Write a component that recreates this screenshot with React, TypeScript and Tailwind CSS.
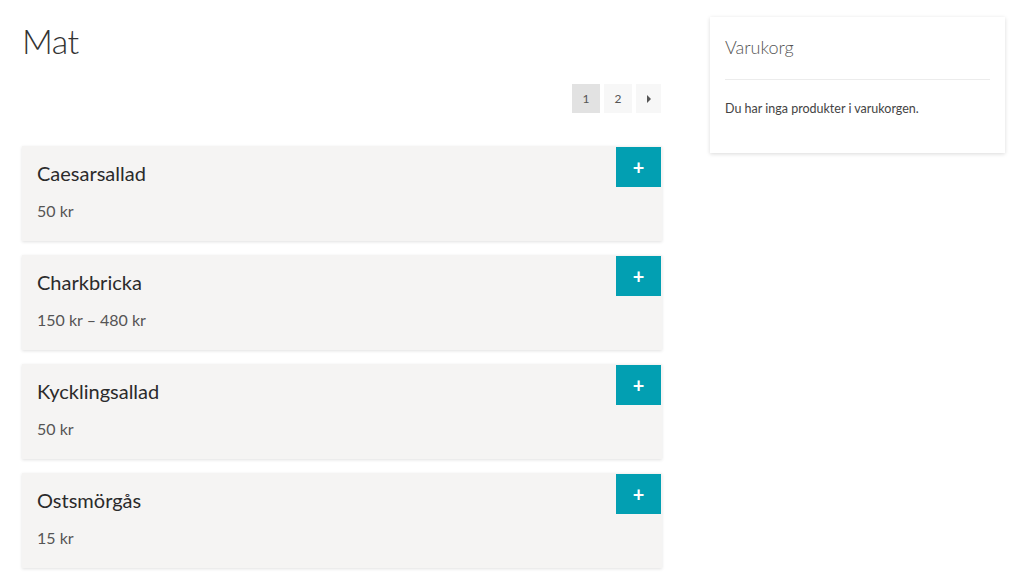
import React from "react";

const items = [
  { name: "Caesarsallad", price: "50 kr" },
  { name: "Charkbricka", price: "150 kr – 480 kr" },
  { name: "Kycklingsallad", price: "50 kr" },
  { name: "Ostsmörgås", price: "15 kr" },
];

export default function App() {
  return (
    <div
      className="w-[1024px] h-[582px] bg-white flex overflow-hidden"
      style={{ fontFamily: "Lato, 'Open Sans', sans-serif" }}
    >
      <div className="w-[640px] ml-[22px] flex flex-col">
        <h1 className="mt-[19px] text-[34px] leading-[44px] font-light text-[#333] tracking-[-0.5px]">Mat</h1>
        <div className="flex justify-end gap-[4px] mt-[21px] mr-[1px]">
          <div className="w-[28px] h-[29px] bg-[#e2e2e2] flex items-center justify-center text-[12px] text-[#555]">1</div>
          <div className="w-[28px] h-[29px] bg-[#f7f7f7] flex items-center justify-center text-[12px] text-[#555]">2</div>
          <div className="w-[25px] h-[29px] bg-[#f7f7f7] flex items-center justify-center">
            <svg width="6" height="8" viewBox="0 0 6 8"><path d="M1 0 L5 4 L1 8 Z" fill="#555" /></svg>
          </div>
        </div>
        <div className="flex flex-col gap-[14px] mt-[33px]">
          {items.map((it) => (
            <div
              key={it.name}
              className="relative h-[95px] bg-[#f5f4f3] shadow-[0_1px_3px_rgba(0,0,0,0.12)] pl-[15px] pt-[13px]"
            >
              <div className="text-[20px] leading-[28px] text-[#2b2b2b]">{it.name}</div>
              <div className="mt-[13px] text-[16px] leading-[22px] text-[#555]">{it.price}</div>
              <div className="absolute right-[1px] top-[1px] w-[45px] h-[40px] bg-[#029fb2] flex items-center justify-center text-white text-[20px] font-bold leading-none">
                +
              </div>
            </div>
          ))}
        </div>
      </div>
      <div className="ml-[48px] mt-[17px] w-[295px] h-[136px] bg-white shadow-[0_1px_4px_rgba(0,0,0,0.15)] px-[15px] flex flex-col">
        <div className="mt-[18px] text-[18px] leading-[24px] font-light text-[#555]">Varukorg</div>
        <div className="mt-[20px] h-px bg-[#ececec]" />
        <div className="mt-[20px] text-[12.5px] leading-[18px] text-[#444]">Du har inga produkter i varukorgen.</div>
      </div>
    </div>
  );
}
